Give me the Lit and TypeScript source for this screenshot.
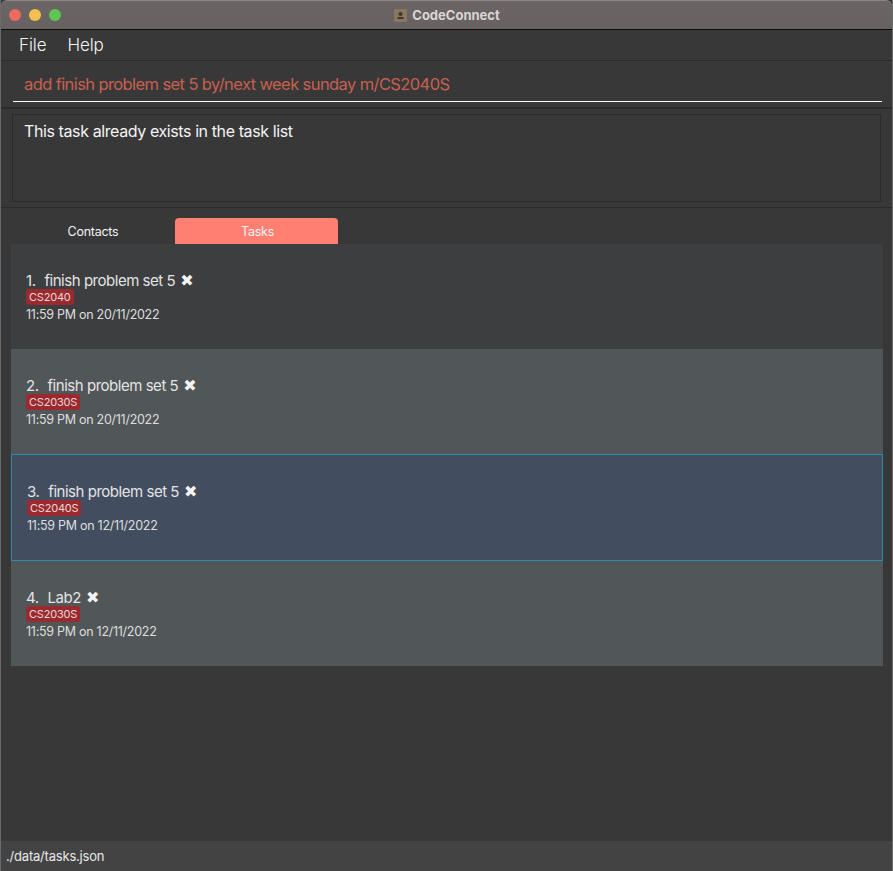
import { LitElement, html, css } from "lit";
import { customElement } from "lit/decorators.js";

const TASKS = [
  { n: "1.", name: "finish problem set 5", tag: "CS2040", when: "11:59 PM on 20/11/2022", cls: "odd", h: 105 },
  { n: "2.", name: "finish problem set 5", tag: "CS2030S", when: "11:59 PM on 20/11/2022", cls: "even", h: 105 },
  { n: "3.", name: "finish problem set 5", tag: "CS2040S", when: "11:59 PM on 12/11/2022", cls: "selected", h: 107 },
  { n: "4.", name: "Lab2", tag: "CS2030S", when: "11:59 PM on 12/11/2022", cls: "even", h: 105 },
];

@customElement("app-root")
export class AppRoot extends LitElement {
  static styles = css`
    :host {
      display: flex;
      flex-direction: column;
      width: 893px;
      height: 871px;
      box-sizing: border-box;
      overflow: hidden;
      background: #383838;
      font-family: Inter, "Liberation Sans", sans-serif;
      color: #fff;
      border-left: 1px solid #6b6b6b;
      border-right: 1px solid #6b6b6b;
    }
    .title {
      height: 28px;
      flex: none;
      background: linear-gradient(#6c6565, #686161);
      border-bottom: 1px solid #0c0c0c;
      border-top: 1px solid #8a8585;
      display: flex;
      align-items: center;
      justify-content: center;
      position: relative;
      border-radius: 6px 6px 0 0;
      font-size: 13px;
      font-weight: 700;
      color: #d8d6d6;
      gap: 5px;
      padding-left: 1px;
    }
    .lights {
      position: absolute;
      left: 8px;
      top: 8px;
      display: flex;
      gap: 8px;
    }
    .light { width: 12px; height: 12px; border-radius: 50%; }
    .r { background: #ed6a5e; }
    .y { background: #f4bf4f; }
    .g { background: #61c554; }
    .doc { display: block; }
    .menu {
      height: 31px;
      flex: none;
      box-sizing: border-box;
      display: flex;
      align-items: center;
      gap: 21px;
      padding: 0 0 0 18px;
      font-size: 17px;
      font-weight: 300;
      letter-spacing: -0.1px;
      color: #f4f4f4;
      border-bottom: 1px solid #2b2b2b;
    }
    .cmd {
      height: 48px;
      flex: none;
      box-sizing: border-box;
      padding: 0 10px 0 12px;
      border-bottom: 2px solid #2c2c2c;
    }
    .cmd-in {
      height: 41px;
      box-sizing: border-box;
      border-bottom: 1px solid #fff;
      padding: 5px 0 0 11px;
      display: flex;
      align-items: center;
      font-size: 16.5px;
      letter-spacing: -0.6px;
      color: #c8604f;
    }
    .result {
      flex: none;
      height: 99px;
      box-sizing: border-box;
      padding: 5px 11px;
      border-bottom: 1px solid #2b2b2b;
    }
    .result-box {
      height: 88px;
      box-sizing: border-box;
      border: 1px solid #2b2b2b;
      padding: 7px 11px;
      font-size: 16px;
      line-height: 18px;
      letter-spacing: -0.4px;
      color: #f4f4f4;
    }
    .tabs {
      flex: none;
      display: flex;
      height: 26px;
      margin-top: 10px;
      padding-left: 10px;
      font-size: 12.5px;
      letter-spacing: -0.25px;
      color: #f4f4f4;
    }
    .tab {
      width: 164px;
      display: flex;
      align-items: center;
      justify-content: center;
    }
    .tab.on {
      width: 163px;
      padding-left: 2px;
      box-sizing: border-box;
      background: #ff7f72;
      border-radius: 4px 4px 0 0;
    }
    .list {
      flex: 1;
      margin: 0 9px 0 10px;
      display: flex;
      flex-direction: column;
    }
    .item {
      box-sizing: border-box;
      padding: 27px 15px 0;
    }
    .odd { background: #3c3e40; }
    .even { background: #515658; }
    .selected {
      background: #424d60;
      border: 1px solid #2f8ca8;
      padding-top: 27px;
    }
    .name {
      display: flex;
      align-items: center;
      height: 18px;
      font-size: 15px;
      color: #e4e4e4;
      letter-spacing: -0.47px;
    }
    .num { margin-right: 9px; }
    .x {
      margin-left: 5px;
      font-family: "DejaVu Sans", sans-serif;
      font-size: 16px;
      letter-spacing: 0;
      color: #f4f4f4;
    }
    .tag {
      background: #9a2a2e;
      color: #e8d8d8;
      font-size: 11px;
      line-height: 16px;
      height: 16px;
      padding: 0 3px;
      border-radius: 3px;
      letter-spacing: -0.2px;
    }
    .tagrow { height: 16px; display: flex; }
    .when {
      font-size: 12.5px;
      line-height: 16px;
      margin-top: 2px;
      letter-spacing: -0.27px;
      color: #dedede;
    }
    .status {
      flex: none;
      height: 30px;
      background: #434343;
      display: flex;
      align-items: center;
      padding-left: 5px;
      font-size: 13px;
      letter-spacing: -0.2px;
      color: #e8e8e8;
    }
  `;

  render() {
    return html`
      <div class="title">
        <div class="lights"><span class="light r"></span><span class="light y"></span><span class="light g"></span></div>
        <svg class="doc" width="13" height="13" viewBox="0 0 13 13">
          <rect width="13" height="13" rx="1" fill="#8a7760" />
          <circle cx="6.5" cy="5" r="2" fill="#3f3528" />
          <rect x="3.5" y="8" width="6" height="2" fill="#3f3528" />
        </svg>
        <span>CodeConnect</span>
      </div>
      <div class="menu"><span>File</span><span>Help</span></div>
      <div class="cmd"><div class="cmd-in">add finish problem set 5 by/next week sunday m/CS2040S</div></div>
      <div class="result"><div class="result-box">This task already exists in the task list</div></div>
      <div class="tabs"><div class="tab">Contacts</div><div class="tab on">Tasks</div></div>
      <div class="list">
        ${TASKS.map(
          (t) => html`<div class="item ${t.cls}" style="height:${t.h}px">
            <div class="name">
              <span class="num">${t.n}</span><span>${t.name}</span><span class="x">✖</span>
            </div>
            <div class="tagrow"><span class="tag">${t.tag}</span></div>
            <div class="when">${t.when}</div>
          </div>`
        )}
      </div>
      <div class="status">./data/tasks.json</div>
    `;
  }
}
